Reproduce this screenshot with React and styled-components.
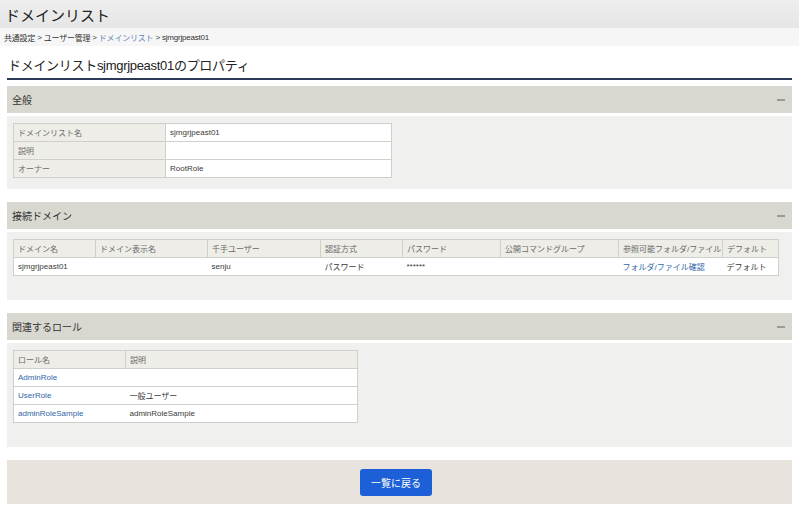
import styled, { createGlobalStyle } from 'styled-components';

const GlobalStyle = createGlobalStyle`
  html, body {
    margin: 0;
    padding: 0;
    background: #fff;
    font-family: "Liberation Sans", "Noto Sans CJK JP", sans-serif;
    color: #333;
  }
`;

const TitleBar = styled.div`
  height: 28px;
  padding-left: 5px;
  display: flex;
  align-items: center;
  background: linear-gradient(#eeeeee, #e6e6e6);
  font-size: 15px;
  color: #222;
`;

const Breadcrumb = styled.div`
  height: 18px;
  padding-left: 4px;
  display: flex;
  align-items: center;
  background: #f6f6f6;
  font-size: 8px;
  letter-spacing: -0.2px;
  color: #333;
`;

const Crumb = styled.span`
  color: ${(p) => (p.$link ? '#5f86b8' : '#333')};
`;

const Sep = styled.span`
  margin: 0 2px;
`;

const Content = styled.div`
  padding: 0 7px;
`;

const Heading = styled.h1`
  margin: 10px 0 6px;
  padding: 0 0 2px 1px;
  height: 20px;
  font-size: 13px;
  font-weight: normal;
  line-height: 19px;
  letter-spacing: -0.3px;
  color: #222;
  border-bottom: 2px solid #2c3a57;
`;

const Section = styled.section`
  margin-bottom: 13px;
`;

const SectionHeader = styled.div`
  height: 27px;
  margin-bottom: 3px;
  padding: 0 7px 0 5px;
  display: flex;
  align-items: center;
  justify-content: space-between;
  background: #d9d8d0;
  font-size: 10px;
  color: #333;
`;

const Collapse = styled.span`
  width: 8px;
  height: 2px;
  background: #9c9b92;
`;

const SectionBody = styled.div`
  padding: 7px 6px ${(p) => p.$pb}px;
  background: #f0f0ee;
`;

const Table = styled.table`
  width: ${(p) => p.$w}px;
  border-collapse: collapse;
  table-layout: fixed;
  border: 1px solid #cfcfcb;
  font-size: 8px;
  background: #fff;
`;

const Th = styled.th`
  height: 17px;
  padding: 0 4px;
  border: 1px solid #cfcfcb;
  background: #eeede7;
  color: #6a6a6a;
  font-weight: normal;
  text-align: left;
  white-space: nowrap;
`;

const Td = styled.td`
  height: 17px;
  padding: 0 4px;
  border-top: 1px solid #cfcfcb;
  border-bottom: 1px solid #cfcfcb;
  color: #3a3a3a;
  white-space: nowrap;
`;

const Link = styled.a`
  color: #2f66a8;
  text-decoration: none;
`;

const Footer = styled.div`
  height: 44px;
  display: flex;
  align-items: center;
  justify-content: center;
  padding-right: 7px;
  background: #e8e4dd;
`;

const Button = styled.button`
  width: 72px;
  height: 27px;
  border: none;
  border-radius: 3px;
  background: #1c5fd6;
  color: #fff;
  font-family: inherit;
  font-size: 10px;
`;

const domainCols = [
  ['ドメイン名', 82],
  ['ドメイン表示名', 112],
  ['千手ユーザー', 113],
  ['認証方式', 82],
  ['パスワード', 98],
  ['公開コマンドグループ', 118],
  ['参照可能フォルダ/ファイル', 104],
  ['デフォルト', 56],
];

const roles = [
  ['AdminRole', ''],
  ['UserRole', '一般ユーザー'],
  ['adminRoleSample', 'adminRoleSample'],
];

export default function App() {
  return (
    <>
      <GlobalStyle />
      <TitleBar>ドメインリスト</TitleBar>
      <Breadcrumb>
        <Crumb>共通設定</Crumb><Sep>&gt;</Sep>
        <Crumb>ユーザー管理</Crumb><Sep>&gt;</Sep>
        <Crumb $link>ドメインリスト</Crumb><Sep>&gt;</Sep>
        <Crumb>sjmgrjpeast01</Crumb>
      </Breadcrumb>
      <Content>
        <Heading>ドメインリストsjmgrjpeast01のプロパティ</Heading>

        <Section>
          <SectionHeader>全般<Collapse /></SectionHeader>
          <SectionBody $pb={11}>
            <Table $w={379}>
              <colgroup><col style={{ width: 152 }} /><col /></colgroup>
              <tbody>
                <tr><Th>ドメインリスト名</Th><Td>sjmgrjpeast01</Td></tr>
                <tr><Th>説明</Th><Td></Td></tr>
                <tr><Th>オーナー</Th><Td>RootRole</Td></tr>
              </tbody>
            </Table>
          </SectionBody>
        </Section>

        <Section>
          <SectionHeader>接続ドメイン<Collapse /></SectionHeader>
          <SectionBody $pb={24}>
            <Table $w={765}>
              <colgroup>
                {domainCols.map(([n, w]) => <col key={n} style={{ width: w }} />)}
              </colgroup>
              <thead>
                <tr>{domainCols.map(([n]) => <Th key={n}>{n}</Th>)}</tr>
              </thead>
              <tbody>
                <tr>
                  <Td>sjmgrjpeast01</Td>
                  <Td></Td>
                  <Td>senju</Td>
                  <Td>パスワード</Td>
                  <Td>******</Td>
                  <Td></Td>
                  <Td><Link href="#">フォルダ/ファイル確認</Link></Td>
                  <Td>デフォルト</Td>
                </tr>
              </tbody>
            </Table>
          </SectionBody>
        </Section>

        <Section>
          <SectionHeader>関連するロール<Collapse /></SectionHeader>
          <SectionBody $pb={24}>
            <Table $w={345}>
              <colgroup><col style={{ width: 112 }} /><col /></colgroup>
              <thead>
                <tr><Th>ロール名</Th><Th>説明</Th></tr>
              </thead>
              <tbody>
                {roles.map(([name, desc]) => (
                  <tr key={name}>
                    <Td><Link href="#">{name}</Link></Td>
                    <Td>{desc}</Td>
                  </tr>
                ))}
              </tbody>
            </Table>
          </SectionBody>
        </Section>

        <Footer>
          <Button>一覧に戻る</Button>
        </Footer>
      </Content>
    </>
  );
}
